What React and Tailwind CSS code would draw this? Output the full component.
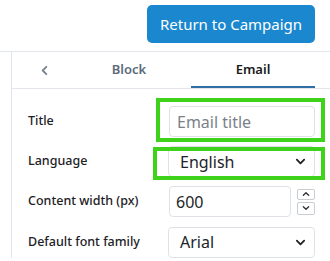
import React from "react";

const font = { fontFamily: '"Noto Sans", "Open Sans", sans-serif' };

function Chevron({ dir = "down", className = "" }) {
  const d = dir === "down" ? "M2 4l4 4 4-4" : dir === "up" ? "M2 8l4-4 4 4" : "M8 2L4 6l4 4";
  return (
    <svg viewBox="0 0 12 12" className={className} fill="none" stroke="currentColor" strokeWidth="2" strokeLinecap="round" strokeLinejoin="round">
      <path d={d} />
    </svg>
  );
}

function Select({ value }) {
  return (
    <div className="flex h-[31px] w-[147px] items-center justify-between rounded-[4px] border border-[#dee2e6] bg-white pl-[11px] pr-[8px] text-[16px] text-[#212529]">
      <span>{value}</span>
      <Chevron dir="down" className="h-[11px] w-[11px] text-[#222]" />
    </div>
  );
}

export default function App() {
  return (
    <div className="relative h-[261px] w-[330px] overflow-hidden bg-white" style={font}>
      <div className="flex h-[52px] items-start justify-end border-b border-[#e3e6ea] pr-[15px] pt-[5px]">
        <button className="h-[38px] w-[168px] rounded-[5px] bg-[#1b87cf] text-[15px] text-white">
          Return to Campaign
        </button>
      </div>
      <div className="flex">
        <div className="w-[11px]" />
        <div className="flex-1 border-l border-[#dfe5ec]">
          <div className="flex h-[37px] border-b border-[#e3e6ea] pr-[15px] text-[13px] font-semibold">
            <div className="flex w-[55px] items-center justify-center pl-[9px] text-[#7a8591]">
              <Chevron dir="left" className="h-[11px] w-[11px]" />
            </div>
            <div className="flex flex-1 items-center justify-center text-[#5b6b7b]">Block</div>
            <div className="flex flex-1 items-center justify-center border-b-2 border-[#2f6ea3] pt-[2px] text-[#1a1a1a]">Email</div>
          </div>
          <div className="flex flex-col gap-[9px] pl-[16px] pr-[15px] pt-[17px] text-[12.5px] font-medium text-[#1d2125]">
            <div className="flex h-[31px] items-center justify-between">
              <span>Title</span>
              <div className="flex h-[31px] w-[146px] items-center rounded-[4px] border border-[#dee2e6] pl-[7px] text-[16px] font-normal text-[#7b8188]">
                Email title
              </div>
            </div>
            <div className="flex h-[31px] items-center justify-between">
              <span>Language</span>
              <div className="font-normal"><Select value="English" /></div>
            </div>
            <div className="flex h-[31px] items-center justify-between">
              <span>Content width (px)</span>
              <div className="flex items-center gap-[6px] font-normal">
                <div className="flex h-[31px] w-[122px] items-center rounded-[4px] border border-[#dee2e6] pl-[6px] text-[16px] text-[#212529]">
                  600
                </div>
                <div className="flex flex-col gap-[2px]">
                  <div className="flex h-[11px] w-[18px] items-center justify-center rounded-[2px] border border-[#c8cdd2] text-[#333]">
                    <Chevron dir="up" className="h-[8px] w-[8px]" />
                  </div>
                  <div className="flex h-[13px] w-[18px] items-center justify-center rounded-[2px] border border-[#c8cdd2] text-[#333]">
                    <Chevron dir="down" className="h-[8px] w-[8px]" />
                  </div>
                </div>
              </div>
            </div>
            <div className="flex h-[32px] items-center justify-between">
              <span>Default font family</span>
              <div className="font-normal"><Select value="Arial" /></div>
            </div>
          </div>
        </div>
      </div>
      <div className="pointer-events-none absolute left-[156px] top-[98px] h-[44px] w-[169px] border-[4px] border-[#3fd21a]" />
      <div className="pointer-events-none absolute left-[153px] top-[147px] h-[33px] w-[172px] border-[4px] border-[#3fd21a]" />
    </div>
  );
}
